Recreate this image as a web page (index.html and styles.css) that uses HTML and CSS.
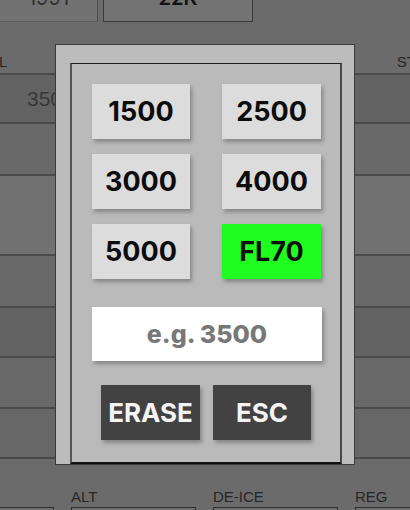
FILE: index.html
```html
<!DOCTYPE html>
<html>
<head>
<meta charset="utf-8">
<link rel="stylesheet" href="styles.css">
</head>
<body>
<div class="app">
  <div class="toprow">
    <div class="cell c1"><span>1991</span></div>
    <div class="cell c2"><span>22K</span></div>
  </div>
  <div class="labels">
    <span class="lab">L</span>
    <span class="lab">ST</span>
  </div>
  <div class="table">
    <div class="row r1"><span class="val">3500</span></div>
    <div class="row r2"></div>
    <div class="row r3"></div>
    <div class="row r4"></div>
    <div class="row r5"></div>
    <div class="row r6"></div>
    <div class="row r7"></div>
  </div>
  <div class="fields">
    <div class="field f0"><div class="flabel">&nbsp;</div><div class="fbox"></div></div>
    <div class="field"><div class="flabel">ALT</div><div class="fbox"></div></div>
    <div class="field"><div class="flabel">DE-ICE</div><div class="fbox"></div></div>
    <div class="field"><div class="flabel">REG</div><div class="fbox"></div></div>
  </div>
</div>

<div class="modal">
  <div class="inner">
    <div class="choices">
      <button class="btn light">1500</button>
      <button class="btn light">2500</button>
      <button class="btn light">3000</button>
      <button class="btn light">4000</button>
      <button class="btn light">5000</button>
      <button class="btn green">FL70</button>
    </div>
    <input class="entry" type="text" placeholder="e.g. 3500">
    <div class="actions">
      <button class="btn dark w1">ERASE</button>
      <button class="btn dark w2">ESC</button>
    </div>
  </div>
</div>
</body>
</html>
```
FILE: styles.css
```css
html, body {
  margin: 0;
  padding: 0;
}
body {
  width: 410px;
  height: 510px;
  overflow: hidden;
  background: #6b6b6b;
  font-family: "Liberation Sans", Arial, sans-serif;
  position: relative;
}
.app {
  width: 410px;
}
.toprow {
  display: flex;
  height: 22px;
}
.cell {
  box-sizing: border-box;
  height: 22px;
  display: flex;
  justify-content: center;
  align-items: flex-start;
  overflow: hidden;
  font-family: Inter, sans-serif;
  font-size: 20px;
  line-height: 20px;
}
.cell span {
  margin-top: -12px;
}
.c1 {
  width: 98px;
  background: #727272;
  border-right: 1px solid #4a4a4a;
  border-bottom: 1px solid #5e5e5e;
  color: #2e2e2e;
}
.c2 {
  margin-left: 5px;
  width: 150px;
  background: #737373;
  border: 1px solid #3a3a3a;
  border-top: none;
  color: #111;
  font-weight: 600;
}
.labels {
  height: 51px;
  display: flex;
  justify-content: space-between;
  align-items: flex-start;
  padding-top: 32px;
  box-sizing: border-box;
  font-size: 15px;
  color: #262626;
  line-height: 15px;
}
.labels .lab:first-child {
  margin-left: -1px;
}
.labels .lab:last-child {
  margin-right: -6px;
}
.table {
  border-top: 2px solid #4a4a4a;
}
.row {
  box-sizing: border-box;
  border-bottom: 2px solid #4a4a4a;
}
.r1 { height: 49px; background: #636363; display: flex; align-items: center; }
.r2 { height: 52px; background: #696969; }
.r3 { height: 80px; background: #717171; }
.r4 { height: 52px; background: #696969; }
.r5 { height: 50px; background: #626262; }
.r6 { height: 51px; background: #696969; }
.r7 { height: 50px; background: #676767; }
.val {
  margin-left: 27px;
  font-size: 21px;
  color: #383838;
}
.fields {
  display: flex;
  gap: 17px;
  margin-left: -71px;
  padding-top: 30px;
}
.field {
  width: 125px;
  flex: none;
}
.flabel {
  font-size: 15px;
  line-height: 15px;
  color: #262626;
  height: 18px;
}
.fbox {
  height: 20px;
  border: 1px solid #2e2e2e;
  background: #6e6e6e;
}

/* modal */
.modal {
  position: absolute;
  left: 55px;
  top: 44px;
  width: 300px;
  height: 421px;
  box-sizing: border-box;
  background: #bcbcbc;
  border: 1px solid #3a3a3a;
  padding: 18px 12px 0 14px;
}
.inner {
  box-sizing: border-box;
  height: 401px;
  background: #bababa;
  border-top: 1px solid #1e1e1e;
  border-left: 2px solid #555;
  border-right: 2px solid #484848;
  border-bottom: 2px solid #111;
  padding: 20px 19px 0 20px;
}
.choices {
  display: grid;
  grid-template-columns: 98px 99px;
  column-gap: 32px;
  row-gap: 15px;
}
.btn {
  border: none;
  margin: 0;
  padding: 0;
  height: 55px;
  font-family: Inter, "Roboto", sans-serif;
  font-weight: 700;
  font-size: 27px;
  box-shadow: 2px 3px 4px rgba(0, 0, 0, 0.28);
  cursor: pointer;
}
.light {
  background: #dcdcdc;
  color: #0c0c0c;
}
.green {
  background: #1ffc1f;
  color: #0c0c0c;
}
.entry {
  display: block;
  box-sizing: border-box;
  margin-top: 28px;
  width: 230px;
  height: 54px;
  border: none;
  background: #fff;
  text-align: center;
  font-family: Inter, sans-serif;
  font-weight: 800;
  font-size: 25px;
  box-shadow: 2px 3px 4px rgba(0, 0, 0, 0.28);
  outline: none;
}
.entry::placeholder {
  font-family: Inter, sans-serif;
  color: #787878;
  font-weight: 800;
  opacity: 1;
}
.actions {
  display: flex;
  justify-content: center;
  gap: 13px;
  margin-top: 24px;
  padding-right: 1px;
}
.dark {
  background: #424242;
  color: #f4f4f4;
  font-size: 26px;
}
.w1 { width: 99px; }
.w2 { width: 98px; }
```
